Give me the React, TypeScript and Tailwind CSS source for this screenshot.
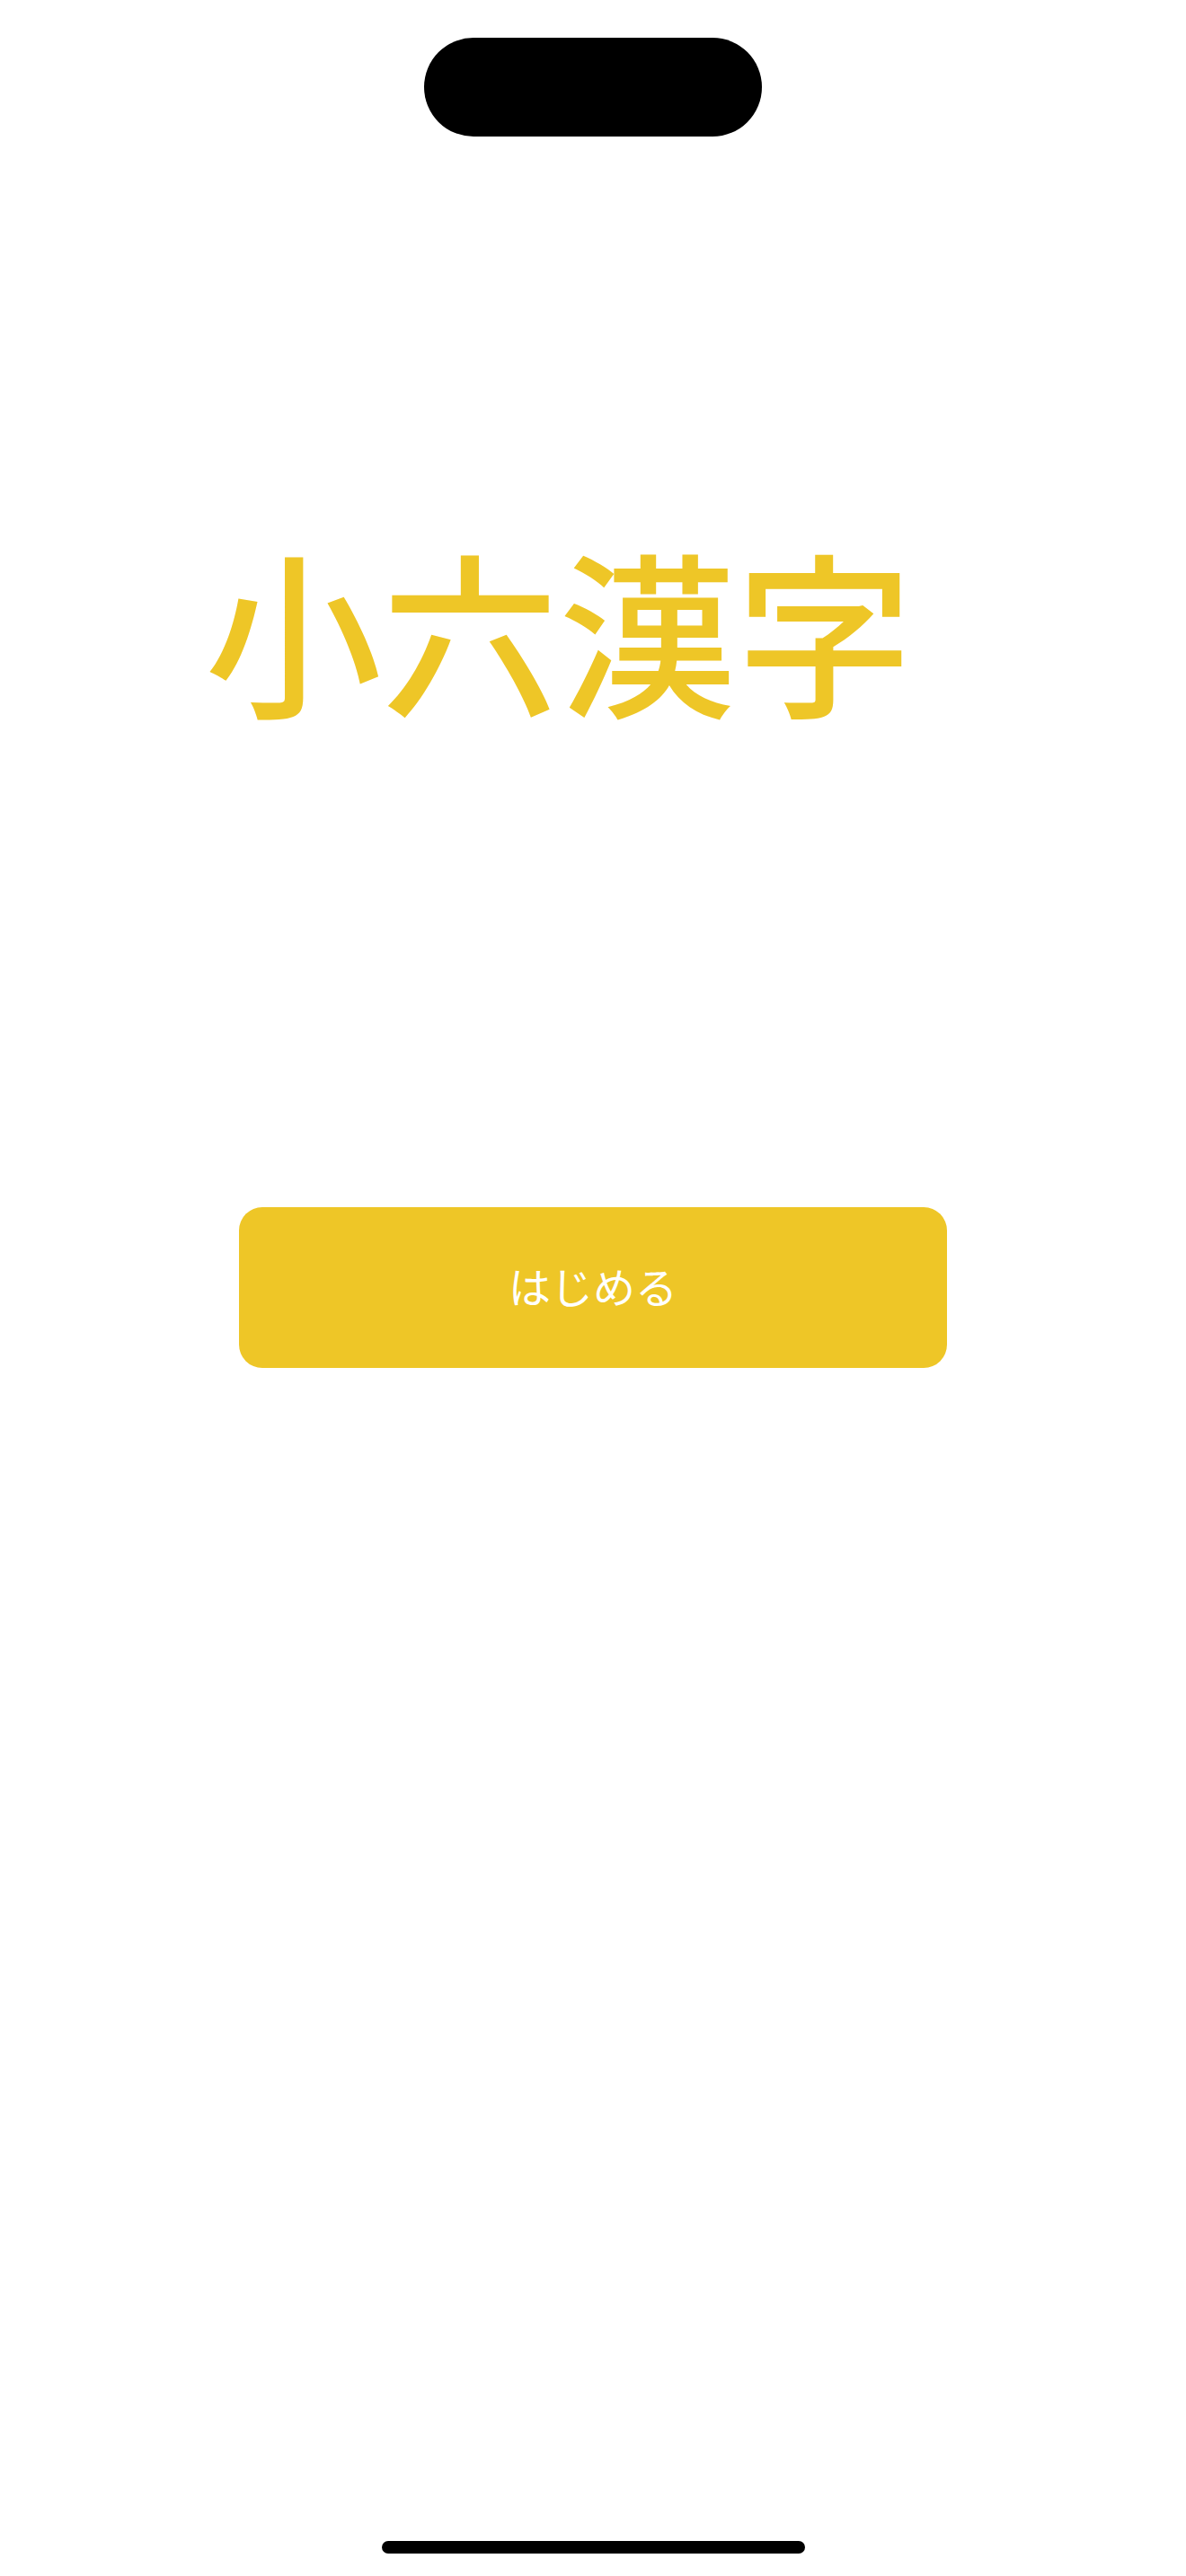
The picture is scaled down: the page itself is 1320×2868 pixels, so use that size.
export default function App() {
  return (
    <div className="flex h-[2868px] w-full flex-col items-stretch bg-white" style={{ fontFamily: '"Noto Sans CJK JP", "Noto Sans", sans-serif' }}>
      {/* Dynamic island */}
      <div className="flex justify-center pt-[42px]">
        <div className="h-[110px] w-[376px] rounded-full bg-black" />
      </div>

      {/* Title */}
      <h1 className="mt-[448px] pl-[228px] text-[197px] leading-[197px] font-medium text-[#eec627]">
        小六漢字
      </h1>

      {/* Start button */}
      <div className="mt-[547px] flex justify-center">
        <button className="h-[179px] w-[788px] rounded-[26px] bg-[#eec627] pb-[6px] text-[47px] leading-none text-white">
          はじめる
        </button>
      </div>

      {/* Home indicator */}
      <div className="mt-auto flex justify-center pb-[25px]">
        <div className="h-[14px] w-[471px] rounded-full bg-black" />
      </div>
    </div>
  );
}
